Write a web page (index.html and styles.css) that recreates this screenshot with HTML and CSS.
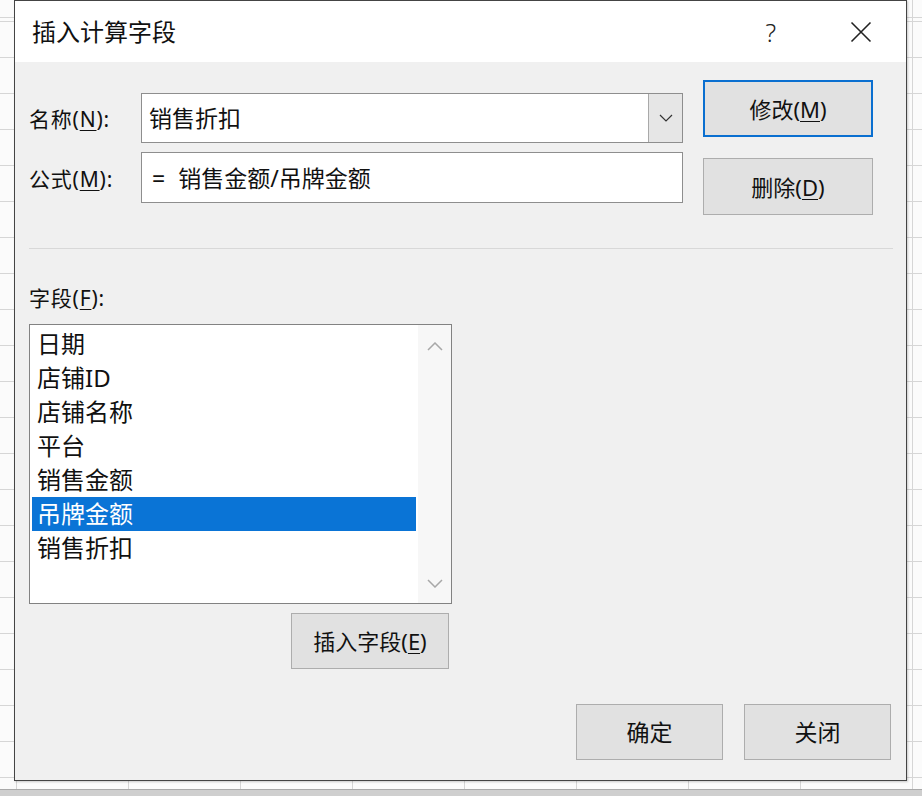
FILE: index.html
```html
<!DOCTYPE html>
<html lang="zh-CN">
<head>
<meta charset="utf-8">
<title>插入计算字段</title>
<link rel="stylesheet" href="styles.css">
</head>
<body>
<div class="screen">
  <div class="dialog">
    <div class="titlebar">
      <span class="title">插入计算字段</span>
      <span class="help">?</span>
      <span class="close">
        <svg width="22" height="22" viewBox="0 0 22 22"><path d="M1.5 1.5 L20.5 20.5 M20.5 1.5 L1.5 20.5" stroke="#222" stroke-width="1.6" fill="none"/></svg>
      </span>
    </div>
    <div class="body">
      <div class="top">
        <div class="form">
          <div class="row">
            <span class="lbl">名称(<u>N</u>):</span>
            <div class="combo">
              <span class="val">销售折扣</span>
              <span class="drop"><svg width="14" height="8" viewBox="0 0 14 8"><path d="M1 1 L7 7 L13 1" stroke="#333" stroke-width="1.2" fill="none"/></svg></span>
            </div>
          </div>
          <div class="row row2">
            <span class="lbl">公式(<u>M</u>):</span>
            <div class="input"><span class="val val-formula"><span class="eq">=</span>销售金额/吊牌金额</span></div>
          </div>
        </div>
        <div class="side">
          <button class="btn btn-side btn-default">修改(<u>M</u>)</button>
          <button class="btn btn-side btn-second">删除(<u>D</u>)</button>
        </div>
      </div>
      <div class="sep"></div>
      <div class="fields-label">字段(<u>F</u>):</div>
      <div class="listbox">
        <ul class="items">
          <li class="item">日期</li>
          <li class="item">店铺ID</li>
          <li class="item">店铺名称</li>
          <li class="item">平台</li>
          <li class="item">销售金额</li>
          <li class="item item-selected">吊牌金额</li>
          <li class="item">销售折扣</li>
        </ul>
        <div class="scroll">
          <svg width="16" height="9" viewBox="0 0 16 9"><path d="M1 8 L8 1 L15 8" stroke="#a8a8a8" stroke-width="1.5" fill="none"/></svg>
          <svg width="16" height="9" viewBox="0 0 16 9"><path d="M1 1 L8 8 L15 1" stroke="#a8a8a8" stroke-width="1.5" fill="none"/></svg>
        </div>
      </div>
      <div class="insert-row">
        <button class="btn btn-insert">插入字段(<u>E</u>)</button>
      </div>
      <div class="footer">
        <button class="btn btn-foot">确定</button>
        <button class="btn btn-foot">关闭</button>
      </div>
    </div>
  </div>
  <div class="band"></div>
</div>
</body>
</html>
```
FILE: styles.css
```css
html, body {
  margin: 0;
  padding: 0;
}
body {
  width: 922px;
  height: 796px;
  overflow: hidden;
  font-family: "Noto Sans", "Noto Sans CJK SC", sans-serif;
  color: #111111;
  background:
    repeating-linear-gradient(to bottom, #d6d6d6 0 1px, transparent 1px 36px) 0 21px,
    repeating-linear-gradient(to right, #d6d6d6 0 1px, transparent 1px 112px) 16px 0,
    #fbfbfb;
}
.screen {
  display: flex;
  flex-direction: column;
}
.dialog {
  margin-left: 14px;
  width: 893px;
  height: 781px;
  box-sizing: border-box;
  border: 1px solid #444444;
  background: #f0f0f0;
  display: flex;
  flex-direction: column;
  box-shadow: 1px 1px 2px rgba(0,0,0,0.2);
}
.titlebar {
  height: 61px;
  flex: none;
  background: #ffffff;
  display: flex;
  align-items: center;
  padding-left: 17px;
}
.title {
  font-size: 24px;
  line-height: 30px;
  flex: 1;
}
.help {
  font-family: "Noto Sans", sans-serif;
  font-weight: 300;
  font-size: 25px;
  line-height: 30px;
  margin-right: 74px;
  color: #222;
}
.close {
  display: flex;
  width: 22px;
  height: 22px;
  margin-right: 34px;
}
.body {
  flex: 1;
  display: flex;
  flex-direction: column;
  padding: 0 13px 20px 14px;
}
.top {
  display: flex;
  align-items: flex-start;
}
.form {
  margin-top: 31px;
  width: 654px;
}
.row {
  display: flex;
  align-items: center;
  height: 50px;
}
.row2 {
  margin-top: 9px;
  height: 51px;
}
.lbl {
  width: 112px;
  flex: none;
  font-size: 21px;
  letter-spacing: 0.8px;
}
u {
  text-decoration: underline;
  text-underline-offset: 3px;
  text-decoration-thickness: 1px;
}
.combo, .input {
  flex: 1;
  height: 100%;
  box-sizing: border-box;
  background: #ffffff;
  border: 1px solid #8e8e8e;
  display: flex;
  align-items: center;
}
.val {
  flex: 1;
  font-size: 23px;
  padding-left: 7px;
  line-height: 30px;
}
.val-formula {
  padding-left: 10px;
}
.eq {
  margin-right: 13px;
}
.drop {
  width: 33px;
  height: 100%;
  background: #e6e6e6;
  border-left: 1px solid #a9a9a9;
  display: flex;
  align-items: center;
  justify-content: center;
}
.side {
  margin-top: 18px;
  margin-left: 20px;
  display: flex;
  flex-direction: column;
  gap: 21px;
}
.btn {
  font-family: "Noto Sans", "Noto Sans CJK SC", sans-serif;
  color: #111111;
  background: #e1e1e1;
  border: 1px solid #adadad;
  box-sizing: border-box;
  padding: 0;
  margin: 0;
  font-size: 22px;
  line-height: 30px;
}
.btn-side {
  width: 170px;
  height: 57px;
}
.btn-default {
  border: 2px solid #0a6fd0;
}
.sep {
  margin-top: 33px;
  height: 1px;
  background: #d8d8d8;
}
.fields-label {
  margin-top: 34px;
  font-size: 21px;
  line-height: 30px;
  letter-spacing: 0.8px;
}
.listbox {
  margin-top: 11px;
  width: 423px;
  height: 280px;
  box-sizing: border-box;
  border: 1px solid #828282;
  background: #ffffff;
  display: flex;
}
.items {
  list-style: none;
  margin: 0;
  padding: 2px 0 0 2px;
  width: 384px;
  flex: none;
}
.item {
  height: 34px;
  line-height: 34px;
  font-size: 24px;
  padding-left: 5px;
  white-space: nowrap;
}
.item-selected {
  background: #0a74d6;
  color: #ffffff;
}
.scroll {
  flex: 1;
  margin-left: 2px;
  background: #f7f7f7;
  display: flex;
  flex-direction: column;
  align-items: center;
  justify-content: space-between;
  padding: 17px 0 15px;
}
.insert-row {
  margin-top: 9px;
  width: 423px;
  display: flex;
  justify-content: flex-end;
}
.btn-insert {
  width: 158px;
  height: 56px;
  margin-right: 3px;
}
.footer {
  margin-top: auto;
  display: flex;
  justify-content: flex-end;
  gap: 21px;
  padding-right: 2px;
}
.btn-foot {
  width: 147px;
  height: 56px;
  font-size: 23px;
}
.band {
  margin-top: 8px;
  height: 7px;
  background: #cfcfcf;
  border-top: 1px solid #a9a9a9;
}
```
